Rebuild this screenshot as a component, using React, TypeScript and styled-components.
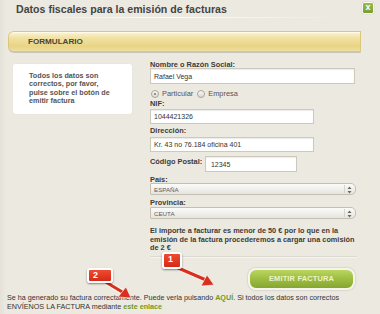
import React from "react";
import styled, { createGlobalStyle } from "styled-components";

const Global = createGlobalStyle`
  html, body { margin: 0; padding: 0; background: #ebe8e0; }
  body { font-family: "Liberation Sans", Arial, sans-serif; }
  * { box-sizing: border-box; }
`;

const Page = styled.div`
  position: relative;
  width: 380px;
  height: 314px;
  overflow: hidden;
  background: linear-gradient(90deg, #e4e1d8 0px, #ece9e1 6px, #ece9e1 100%);
  color: #3a3a3a;
`;

const Header = styled.div`
  position: relative;
  display: flex;
  justify-content: space-between;
  align-items: flex-start;
  height: 31px;
  padding: 1px 6px 0 16px;
  &::after {
    content: "";
    position: absolute;
    left: 10px;
    top: 17px;
    width: 330px;
    height: 1px;
    background: linear-gradient(90deg, rgba(255,255,255,0) 0%, rgba(255,255,255,0.9) 50%, rgba(255,255,255,0) 100%);
  }
`;

const Title = styled.h1`
  margin: 0;
  font-size: 10.6px;
  line-height: 17px;
  font-weight: bold;
  color: #444;
`;

const Close = styled.div`
  width: 12px;
  height: 12px;
  margin-top: 1px;
  border-radius: 2px;
  border: 1px solid #f6f6ee;
  background: linear-gradient(#9cbc4c, #7a9c30);
  color: #fff;
  font-size: 9px;
  font-weight: bold;
  line-height: 9px;
  text-align: center;
  box-shadow: 0 0 1px rgba(0,0,0,0.3);
`;

const Bar = styled.div`
  margin-left: 8px;
  width: 353px;
  height: 22px;
  border-radius: 6px 0 0 6px;
  border: 1px solid #dcc57e;
  border-bottom: 2px solid #c9c6bd;
  background: linear-gradient(#fbf5d6 0%, #f1e2a4 30%, #e9d485 75%, #efe0a0 100%);
  box-shadow: inset 0 1px 0 #fffbe8;
  display: flex;
  align-items: center;
  padding-left: 19px;
  font-size: 8.1px;
  font-weight: bold;
  color: #4a4535;
`;

const Content = styled.div`
  display: grid;
  grid-template-columns: 119px 205px;
  column-gap: 18px;
  padding-left: 13px;
  margin-top: 8px;
`;

const InfoBox = styled.div`
  margin-top: 3px;
  height: 50px;
  background: #fff;
  border-radius: 2px;
  box-shadow: 0 0 1px rgba(0,0,0,0.15);
  padding: 8px 4px 0 16px;
  font-size: 7.2px;
  line-height: 8.3px;
  font-weight: bold;
  color: #555;
  white-space: nowrap;
`;

const Form = styled.div`
  display: flex;
  flex-direction: column;
`;

const Label = styled.div<{ $mt?: number }>`
  margin-top: ${(p) => p.$mt ?? 0}px;
  font-size: 7.4px;
  line-height: 7px;
  font-weight: bold;
  color: #3d3b36;
  white-space: nowrap;
`;

const Input = styled.div<{ $w: number; $h?: number; $mt?: number }>`
  width: ${(p) => p.$w}px;
  height: ${(p) => p.$h ?? 15}px;
  margin-top: ${(p) => p.$mt ?? 0}px;
  background: #fff;
  border: 1px solid #cdc9bd;
  box-shadow: inset 0 1px 1px rgba(0,0,0,0.08);
  display: flex;
  align-items: center;
  padding-left: 3px;
  font-size: 7px;
  color: #333;
`;

const RadioRow = styled.div`
  display: flex;
  align-items: center;
  height: 13px;
  margin-top: 3px;
  font-size: 7.4px;
  color: #555;
`;

const Radio = styled.span<{ $on?: boolean }>`
  position: relative;
  width: 8px;
  height: 8px;
  margin: 0 3px 0 1px;
  border-radius: 50%;
  border: 1px solid #aaa69c;
  background: linear-gradient(#f8f8f6, #dddad2);
  &::after {
    content: "";
    display: ${(p) => (p.$on ? "block" : "none")};
    position: absolute;
    left: 2px;
    top: 2px;
    width: 2px;
    height: 2px;
    border-radius: 50%;
    background: #777;
  }
`;

const RadioText = styled.span`
  margin-right: 3px;
`;

const InlineRow = styled.div`
  display: flex;
  align-items: flex-start;
  margin-top: 4px;
`;

const InlineLabel = styled(Label)`
  width: 55px;
  padding-top: 2px;
`;

const Select = styled.div<{ $mt: number }>`
  position: relative;
  width: 206px;
  height: 12px;
  margin-top: ${(p) => p.$mt}px;
  border: 1px solid #c4bfb2;
  border-radius: 1px 5px 5px 1px;
  background: linear-gradient(#fbfbfa, #e6e4de);
  display: flex;
  align-items: center;
  padding-left: 3px;
  font-size: 6.2px;
  color: #5a5a5a;
  &::after {
    content: "";
    position: absolute;
    right: 10px;
    top: 1px;
    bottom: 1px;
    width: 1px;
    background: #d6d3cb;
  }
`;

const Arrows = styled.svg`
  position: absolute;
  right: 3px;
  top: 2px;
`;

const Note = styled.p`
  margin: 8px 0 0;
  font-size: 7.3px;
  line-height: 8.5px;
  font-weight: bold;
  color: #3d3b36;
  white-space: nowrap;
`;

const Separator = styled.div`
  margin: 3px 23px 0 150px;
  height: 1px;
  background: #dcd9d0;
  box-shadow: 0 1px 0 #f6f4ef;
`;

const ButtonRow = styled.div`
  display: flex;
  justify-content: flex-end;
  padding-right: 25px;
  margin-top: 11px;
`;

const Button = styled.div`
  width: 107px;
  height: 22px;
  border-radius: 8px;
  border: 2px solid #f5f5ea;
  background: linear-gradient(#bad65e 0%, #9dbd42 50%, #86a630 100%);
  box-shadow: 0 0 2px rgba(0,0,0,0.25);
  display: flex;
  align-items: center;
  justify-content: center;
  font-size: 7.4px;
  font-weight: bold;
  letter-spacing: 0.2px;
  color: #eef3c6;
`;

const Message = styled.p`
  margin: 3px 0 0 7px;
  font-size: 7.2px;
  line-height: 9px;
  color: #333;
`;

const Link = styled.span`
  color: #6f9a1e;
  font-weight: bold;
`;

const Callout = styled.div<{ $x: number; $y: number; $w: number; $h: number }>`
  position: absolute;
  left: ${(p) => p.$x}px;
  top: ${(p) => p.$y}px;
  width: ${(p) => p.$w}px;
  height: ${(p) => p.$h}px;
  border: 2px solid #fff;
  border-radius: 3px;
  background: linear-gradient(#f04a30, #d42a18);
  box-shadow: 0 1px 2px rgba(0,0,0,0.45);
  color: #fff;
  font-size: 9px;
  font-weight: bold;
  line-height: 10px;
  padding-left: 4px;
`;

const Overlay = styled.svg`
  position: absolute;
  left: 0;
  top: 0;
  pointer-events: none;
`;

const SelectArrows = () => (
  <Arrows width="5" height="8" viewBox="0 0 5 8">
    <polygon points="2.5,0.5 4.5,3 0.5,3" fill="#666" />
    <polygon points="0.5,5 4.5,5 2.5,7.5" fill="#666" />
  </Arrows>
);

export default function App() {
  return (
    <Page>
      <Global />
      <Header>
        <Title>Datos fiscales para la emisión de facturas</Title>
        <Close>x</Close>
      </Header>
      <Bar>FORMULARIO</Bar>
      <Content>
        <InfoBox>
          Todos los datos son
          <br />
          correctos, por favor,
          <br />
          pulse sobre el botón de
          <br />
          emitir factura
        </InfoBox>
        <Form>
          <Label>Nombre o Razón Social:</Label>
          <Input $w={205} $h={16} $mt={0}>Rafael Vega</Input>
          <RadioRow>
            <Radio $on />
            <RadioText>Particular</RadioText>
            <Radio />
            <RadioText>Empresa</RadioText>
          </RadioRow>
          <Label>NIF:</Label>
          <Input $w={164} $mt={2}>1044421326</Input>
          <Label $mt={3}>Dirección:</Label>
          <Input $w={164} $mt={3}>Kr. 43 no 76.184 oficina 401</Input>
          <InlineRow>
            <InlineLabel>Código Postal:</InlineLabel>
            <Input $w={92} $h={16}>
              &nbsp;12345
            </Input>
          </InlineRow>
          <Label $mt={4}>País:</Label>
          <Select $mt={0}>
            ESPAÑA
            <SelectArrows />
          </Select>
          <Label $mt={4}>Provincia:</Label>
          <Select $mt={1}>
            CEUTA
            <SelectArrows />
          </Select>
          <Note>
            El importe a facturar es menor de 50 € por lo que en la
            <br />
            emisión de la factura procederemos a cargar una comisión
            <br />
            de 2 €
          </Note>
        </Form>
      </Content>
      <Separator />
      <ButtonRow>
        <Button>EMITIR FACTURA</Button>
      </ButtonRow>
      <Message>
        Se ha generado su factura correctamente. Puede verla pulsando <Link>AQUÍ</Link>. Si todos los datos son correctos
        <br />
        ENVÍENOS LA FACTURA mediante <Link>este enlace</Link>
      </Message>

      <Overlay width="380" height="314" viewBox="0 0 380 314">
        <g stroke="#fff" strokeWidth="5" strokeLinecap="round" fill="none" opacity="0.6">
          <line x1="104" y1="281" x2="124" y2="293" />
          <line x1="176" y1="267" x2="206" y2="280" />
        </g>
        <g stroke="#d8301c" strokeWidth="3" strokeLinecap="round" fill="none">
          <line x1="104" y1="281" x2="124" y2="293" />
          <line x1="176" y1="267" x2="206" y2="280" />
        </g>
        <polygon points="131,298 118,297 126,287" fill="#d8301c" stroke="#fff" strokeWidth="0.6" />
        <polygon points="214,285 201,286 207,275" fill="#d8301c" stroke="#fff" strokeWidth="0.6" />
      </Overlay>
      <Callout $x={87} $y={268} $w={26} $h={15}>2</Callout>
      <Callout $x={162} $y={252} $w={20} $h={17}>1</Callout>
    </Page>
  );
}
